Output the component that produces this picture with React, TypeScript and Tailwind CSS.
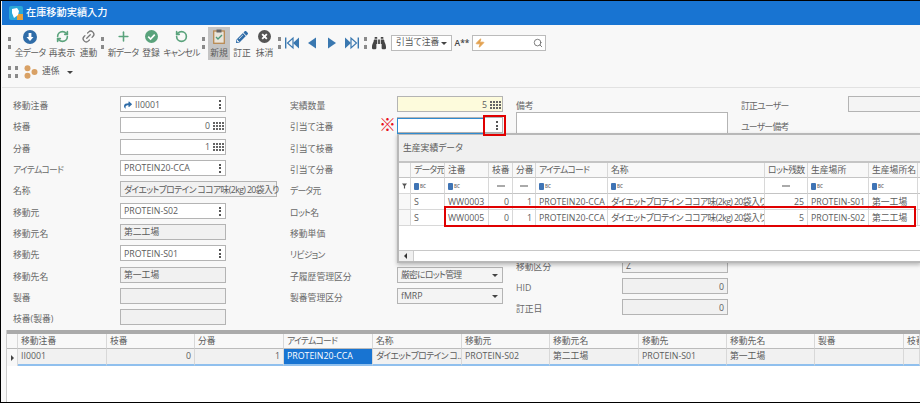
import React from "react";
import { FaBinoculars, FaShare, FaPencilAlt } from "react-icons/fa";
import { Search, Zap, Link2, RefreshCw, RotateCcw, Plus } from "lucide-react";

const kt = (v: unknown) => {
  if (typeof v !== "string") return "";
  if (v.includes("ダイエット")) return " tracking-[-0.62px]";
  if (/[ァ-ヶ]/.test(v)) return " tracking-[-0.7px]";
  return "";
};

const Grip = ({ cls = "" }: { cls?: string }) => (
  <div className={"w-0 h-[12px] border-l-[3px] border-dotted border-[#8a8a8a] shrink-0 " + cls} />
);

const Dots = () => (
  <div className="flex flex-col gap-[1.5px] items-center w-[3px] shrink-0">
    <span className="w-[2px] h-[2px] bg-[#555]" />
    <span className="w-[2px] h-[2px] bg-[#555]" />
    <span className="w-[2px] h-[2px] bg-[#555]" />
  </div>
);

const Num = () => (
  <div className="grid grid-cols-4 gap-[1px] shrink-0">
    {Array.from({ length: 12 }).map((_, i) => (
      <span key={i} className="w-[2px] h-[2px] bg-[#666]" />
    ))}
  </div>
);

const Caret = () => <span className="w-0 h-0 border-x-[3px] border-x-transparent border-t-[3px] border-t-[#444] shrink-0" />;

const TItem = ({ w, label, icon, active }: { w: string; label: string; icon: React.ReactNode; active?: boolean }) => (
  <div className={"flex flex-col items-center shrink-0 h-[33px] " + w + (active ? " bg-[#c4c4c4]" : "")}>
    <div className="h-[20px] flex items-center justify-center">{icon}</div>
    <span className={"text-[8.8px] leading-[12px] whitespace-nowrap text-[#5c5c5c]" + kt(label)}>{label}</span>
  </div>
);

const Nav = ({ d }: { d: React.ReactNode }) => (
  <svg width="20" height="14" viewBox="0 0 20 14" className="shrink-0">{d}</svg>
);

const Label = ({ children, w = "w-[107px]" }: { children: string; w?: string }) => (
  <span className={"text-[8.8px] leading-[16px] pt-[2px] self-start text-[#686868] whitespace-nowrap shrink-0 " + w + kt(children)}>{children}</span>
);

const box = "h-[16px] flex items-center border border-[#b4b4b4] text-[8.8px] leading-[14px] text-[#5c5c5c] px-[3px] pt-[1px] whitespace-nowrap shrink-0";

type FieldP = { label: string; kind?: "lookup" | "num" | "ro" | "select" | "none"; value?: string; w?: string; ico?: boolean; bg?: string };

const Field = ({ kind = "none", value = "", w = "w-[106px]", ico, bg }: FieldP) => {
  if (kind === "none") return null;
  if (kind === "lookup")
    return (
      <div className={box + " bg-white justify-between pr-[4px] " + w}>
        <span className="flex items-center gap-[3px]">
          {ico && <FaShare size={8} className="text-[#2f6ca8]" />}
          {value}
        </span>
        <Dots />
      </div>
    );
  if (kind === "num")
    return (
      <div className={box + " justify-end gap-[3px] pr-[1px] " + (bg ?? "bg-white") + " " + w}>
        <span>{value}</span>
        <Num />
      </div>
    );
  if (kind === "select")
    return (
      <div className={box + " bg-[#f4f4f4] justify-between pr-[4px] " + w}>
        <span className={kt(value)}>{value}</span>
        <Caret />
      </div>
    );
  return (
    <div className={box + " bg-[#f1f1f1] " + w}>
      <span className={kt(value)}>{value}</span>
    </div>
  );
};

const Row = (p: FieldP) => (
  <div className="flex items-center h-[16px]">
    <Label>{p.label}</Label>
    <Field {...p} />
  </div>
);

const leftRows: FieldP[] = [
  { label: "移動注番", kind: "lookup", value: "II0001", ico: true },
  { label: "枝番", kind: "num", value: "0" },
  { label: "分番", kind: "num", value: "1" },
  { label: "アイテムコード", kind: "lookup", value: "PROTEIN20-CCA" },
  { label: "名称", kind: "ro", value: "ダイエットプロテイン ココア味(2kg) 20袋入り", w: "w-[157px]" },
  { label: "移動元", kind: "lookup", value: "PROTEIN-S02" },
  { label: "移動元名", kind: "ro", value: "第二工場" },
  { label: "移動先", kind: "lookup", value: "PROTEIN-S01" },
  { label: "移動先名", kind: "ro", value: "第一工場" },
  { label: "製番", kind: "ro" },
  { label: "枝番(製番)", kind: "ro" },
];

const midRows: FieldP[] = [
  { label: "実績数量", kind: "num", value: "5", bg: "bg-[#fdfbdc]" },
  { label: "引当て注番", kind: "lookup" },
  { label: "引当て枝番" },
  { label: "引当て分番" },
  { label: "データ元" },
  { label: "ロット名" },
  { label: "移動単価" },
  { label: "リビジョン" },
  { label: "子履歴管理区分", kind: "select", value: "厳密にロット管理" },
  { label: "製番管理区分", kind: "select", value: "fMRP" },
];

const Abc = () => (
  <span className="flex items-center gap-[1px]">
    <span className="w-[5px] h-[7px] bg-[#3f74b5] rounded-[1px]" />
    <span className="text-[4.5px] leading-[7px] font-semibold text-[#666]">BC</span>
  </span>
);
const Eq = () => <span className="block w-[8px] h-[2px] bg-[#aaa] mx-auto" />;

const popCols = "grid grid-cols-[12px_34px_44px_24px_23px_72px_157px_43px_61px_49px_1fr]";
const cell = "border-r border-b border-[#d8d8d8] px-[3px] pt-[1px] flex items-center text-[8.8px] leading-[13px] text-[#5c5c5c] whitespace-nowrap overflow-hidden";

const popHead = ["", "データ元", "注番", "枝番", "分番", "アイテムコード", "名称", "ロット残数", "生産場所", "生産場所名", ""];
const popRows = [
  ["S", "WW0003", "0", "1", "PROTEIN20-CCA", "ダイエットプロテイン ココア味(2kg) 20袋入り", "25", "PROTEIN-S01", "第一工場"],
  ["S", "WW0005", "0", "1", "PROTEIN20-CCA", "ダイエットプロテイン ココア味(2kg) 20袋入り", "5", "PROTEIN-S02", "第二工場"],
];

const gridCols = "grid grid-cols-[11px_89px_88px_89px_89px_89px_88px_89px_88px_88px_89px_1fr]";
const gridHead = ["", "移動注番", "枝番", "分番", "アイテムコード", "名称", "移動元", "移動元名", "移動先", "移動先名", "製番", "枝番(製番)"];
const gridRow = ["II0001", "0", "1", "PROTEIN20-CCA", "ダイエットプロテイン コ...", "PROTEIN-S02", "第二工場", "PROTEIN-S01", "第一工場", "", ""];

export default function App() {
  return (
    <div className="relative w-[920px] h-[403px] overflow-hidden bg-[#f8f8f8] border-t border-b border-l border-black flex flex-col [font-family:'Open_Sans','Noto_Sans_CJK_JP',sans-serif] [font-feature-settings:'palt'] text-[#555]">
      {/* Title */}
      <div className="h-[24px] bg-[#1874d2] flex items-center pl-[7px] gap-[3px] shrink-0 ml-[1px]">
        <svg width="14" height="14" viewBox="0 0 14 14">
          <rect width="14" height="14" rx="2" fill="#2aa7d8" />
          <rect x="8" y="8" width="6" height="6" fill="#e8a13a" />
          <path d="M3 3l5-1 2 3-1 4-4 3-2-5z" fill="#fff" />
        </svg>
        <span className="text-[10.2px] text-white font-medium whitespace-nowrap">在庫移動実績入力</span>
      </div>

      {/* Toolbar */}
      <div className="h-[63px] shrink-0 border-b border-[#e2e2e2] flex flex-col ml-[1px]">
        <div className="flex items-center h-[35px] pl-[6px] pt-[1px]">
          <Grip />
          <div className="w-[3px]" />
          <TItem w="w-[32px]" label="全データ" icon={
            <svg width="14" height="14" viewBox="0 0 14 14"><circle cx="7" cy="7" r="7" fill="#2f6ca8" /><path d="M5.6 3h2.8v4H10.5L7 11 3.5 7h2.1z" fill="#fff" /></svg>
          } />
          <TItem w="w-[32px]" label="再表示" icon={<RefreshCw size={13} strokeWidth={3} className="text-[#5aa37c]" />} />
          <TItem w="w-[21px]" label="連動" icon={<Link2 size={15} className="text-[#777] -rotate-45" />} />
          <Grip cls="ml-[2px] mr-[3px]" />
          <TItem w="w-[32px]" label="新データ" icon={<Plus size={15} strokeWidth={2.5} className="text-[#5aa37c]" />} />
          <TItem w="w-[24px]" label="登録" icon={
            <svg width="13" height="13" viewBox="0 0 14 14"><circle cx="7" cy="7" r="7" fill="#5aa37c" /><path d="M3.5 7.2l2.5 2.5 4.5-4.7" stroke="#fff" strokeWidth="1.8" fill="none" /></svg>
          } />
          <TItem w="w-[37px]" label="キャンセル" icon={<RotateCcw size={13} strokeWidth={3} className="text-[#5aa37c]" />} />
          <Grip cls="ml-[2px] mr-[3px]" />
          <TItem active w="w-[22px]" label="新規" icon={
            <svg width="12" height="15" viewBox="0 0 12 15"><rect x="0.7" y="2" width="10.6" height="12.3" fill="#e9e4da" stroke="#b98a52" strokeWidth="1.3" /><rect x="3.5" y="0.5" width="5" height="3" fill="#666" /><path d="M3 8l2 2 4-4" stroke="#4b9a7b" strokeWidth="1.3" fill="none" /></svg>
          } />
          <div className="w-[1px]" />
          <TItem w="w-[22px]" label="訂正" icon={<FaPencilAlt size={12} className="text-[#2f6ca8]" />} />
          <TItem w="w-[23px]" label="抹消" icon={
            <svg width="13" height="13" viewBox="0 0 14 14"><circle cx="7" cy="7" r="7" fill="#555" /><path d="M4.5 4.5l5 5M9.5 4.5l-5 5" stroke="#fff" strokeWidth="2" /></svg>
          } />
          <Grip cls="ml-[2px] mr-[1px]" />
          <Nav d={<><rect x="3" y="1.5" width="1.4" height="11" fill="#3a78b0" /><path d="M11 2v10L5.5 7z" fill="none" stroke="#3a78b0" strokeWidth="1.2" /><path d="M17 1.5v11L11 7z" fill="#3a78b0" /></>} />
          <Nav d={<path d="M14 1.5v11L6 7z" fill="#3a78b0" />} />
          <Nav d={<path d="M6 1.5v11L14 7z" fill="#3a78b0" />} />
          <Nav d={<><path d="M3 1.5v11L9 7z" fill="#3a78b0" /><path d="M9 2v10l5.5-5z" fill="none" stroke="#3a78b0" strokeWidth="1.2" /><rect x="15.6" y="1.5" width="1.4" height="11" fill="#3a78b0" /></>} />
          <Grip cls="ml-[2px] mr-[5px]" />
          <FaBinoculars size={14} className="text-[#444] shrink-0" />
          <div className="w-[5px]" />
          <div className="w-[61px] h-[16px] border border-[#bbb] bg-white flex items-center justify-between px-[4px] shrink-0">
            <span className="text-[8.8px] whitespace-nowrap">引当て注番</span>
            <Caret />
          </div>
          <span className="w-[20px] text-center text-[8.5px] font-semibold text-[#444] shrink-0">A**</span>
          <div className="w-[74px] h-[16px] border border-[#bbb] bg-white flex items-center justify-between px-[2px] shrink-0">
            <Zap size={10} className="text-[#e2a04e]" fill="#e2a04e" />
            <Search size={10} className="text-[#666]" />
          </div>
        </div>
        <div className="flex items-center h-[20px] pl-[6px] mt-[2px]">
          <Grip />
          <Grip cls="ml-[4px]" />
          <svg width="14" height="14" viewBox="0 0 14 14" className="ml-[6px] shrink-0">
            <circle cx="3.5" cy="3.2" r="3" fill="#d9a165" /><circle cx="10.5" cy="7" r="3" fill="#d9a165" /><circle cx="3.5" cy="10.8" r="3" fill="#d9a165" />
          </svg>
          <span className="ml-[4px] text-[8.8px] text-[#5c5c5c]">連係</span>
          <span className="ml-[7px] flex"><Caret /></span>
        </div>
      </div>

      {/* Form */}
      <div className="h-[242px] shrink-0 flex pt-[8px] pl-[12px]">
        <div className="w-[277px] shrink-0 flex flex-col gap-[5.33px]">
          {leftRows.map((r) => <Row key={r.label} {...r} />)}
        </div>
        <div className="w-[226px] shrink-0 flex flex-col gap-[5.33px]">
          {midRows.map((r) => <Row key={r.label} {...r} />)}
        </div>
        <div className="w-[225px] shrink-0 flex flex-col">
          <span className="h-[16px] text-[8.8px] text-[#686868] leading-[20px]">備考</span>
          <div className="h-[22px] w-[212px] border border-[#b4b4b4] bg-white" />
          <div className="flex flex-col gap-[5px] mt-[123px]">
            {[["移動区分", "Z", ""], ["HID", "0", "justify-end"], ["訂正日", "0", "justify-end"]].map(([l, v, j]) => (
              <div key={l} className="flex h-[16px]">
                <span className="w-[106px] text-[8.8px] text-[#686868] pt-[4px] shrink-0">{l}</span>
                <div className={box + " bg-[#f1f1f1] w-[106px] " + j}>{v}</div>
              </div>
            ))}
          </div>
        </div>
        <div className="flex-1 flex flex-col gap-[5.33px]">
          <div className="flex items-center h-[16px]">
            <Label>訂正ユーザー</Label>
            <div className={box + " bg-[#f4f4f4] w-[80px]"} />
          </div>
          <Label>ユーザー備考</Label>
        </div>
      </div>

      {/* Bottom grid */}
      <div className="flex-1 ml-[5px] border-l border-[#ccc] bg-white flex flex-col min-h-0">
        <div className="h-[4px] bg-[#aaa] shrink-0" />
        <div className={gridCols + " h-[15px] bg-[#f8f8f8] shrink-0"}>
          {gridHead.map((h, i) => (
            <div key={i} className={cell + " border-b-[#bbb]" + kt(h)}>{h}</div>
          ))}
        </div>
        <div className={gridCols + " h-[17px] shrink-0"}>
          <div className="flex items-center justify-center border-r border-[#d8d8d8] bg-[#f8f8f8]">
            <span className="w-0 h-0 border-y-[3px] border-y-transparent border-l-[3px] border-l-[#444]" />
          </div>
          {gridRow.map((v, i) => (
            <div key={i} className={
              "border-r border-b-2 border-[#d8d8d8] border-b-[#90c0ee] px-[3px] flex items-center text-[8.8px] whitespace-nowrap overflow-hidden " +
              (i === 3 ? "bg-[#1874d2] text-white font-medium" : "bg-[#f1f1f1] text-[#5c5c5c] ") +
              (i === 1 || i === 2 ? " justify-end" : "") + kt(v)
            }>{v}</div>
          ))}
        </div>
      </div>

      {/* Dropdown popup */}
      <div className="absolute left-[396px] top-[132px] w-[524px] h-[130px] bg-white border-t-2 border-l-2 border-b-2 border-[#b8b8b8] shadow-[0_2px_4px_rgba(0,0,0,0.25)] flex flex-col">
        <div className="h-[28px] bg-[#f0f0f0] border-b-2 border-[#c4c4c4] flex items-center pl-[4px] pt-[2px] shrink-0">
          <span className="text-[8.8px] text-[#5c5c5c]">生産実績データ</span>
        </div>
        <div className={popCols + " h-[15px] bg-[#f8f8f8] shrink-0"}>
          {popHead.map((h, i) => (
            <div key={i} className={cell + " border-b-[#c4c4c4]" + kt(h)}>{h}</div>
          ))}
        </div>
        <div className={popCols + " h-[16px] shrink-0"}>
          <div className={cell + " justify-center px-0"}>
            <svg width="6" height="6" viewBox="0 0 6 6"><path d="M0 0h6L3.7 3v3H2.3V3z" fill="#555" /></svg>
          </div>
          {[<Abc />, <Abc />, <Eq />, <Eq />, <Abc />, <Abc />, <Eq />, <Abc />, <Abc />, null].map((c, i) => (
            <div key={i} className={cell + " border-b-[#c4c4c4]"}>{c}</div>
          ))}
        </div>
        {popRows.map((r) => (
          <div key={r[1]} className={popCols + " h-[16px] shrink-0"}>
            <div className="bg-[#f8f8f8] border-r border-b border-[#d8d8d8]" />
            {r.map((v, i) => (
              <div key={i} className={cell + (i === 2 || i === 3 || i === 6 ? " justify-end" : "") + kt(v)}>{v}</div>
            ))}
            <div className={cell} />
          </div>
        ))}
        <div className="flex-1" />
        <div className="h-[11px] bg-[#f0f0f0] border-t border-[#c8c8c8] flex items-center shrink-0 pl-[2px] gap-[3px]">
          <span className="w-[9px] flex justify-center"><span className="w-0 h-0 border-y-[3px] border-y-transparent border-r-[3px] border-r-[#333]" /></span>
          <div className="flex-1 h-[10px] bg-white border-l border-[#ccc]" />
        </div>
      </div>

      {/* Annotations */}
      <span className="absolute left-[378px] top-[115px] text-[17px] leading-[18px] text-[#e8101c] font-bold">※</span>
      <div className="absolute left-[396px] top-[117px] w-[87px] h-[16px] border border-[#2f8bd0] border-r-0 bg-transparent" />
      <div className="absolute left-[482px] top-[114px] w-[23px] h-[21px] border-2 border-[#e00000]" />
      <div className="absolute left-[443px] top-[205px] w-[472px] h-[21px] border-2 border-[#e00000]" />
    </div>
  );
}
